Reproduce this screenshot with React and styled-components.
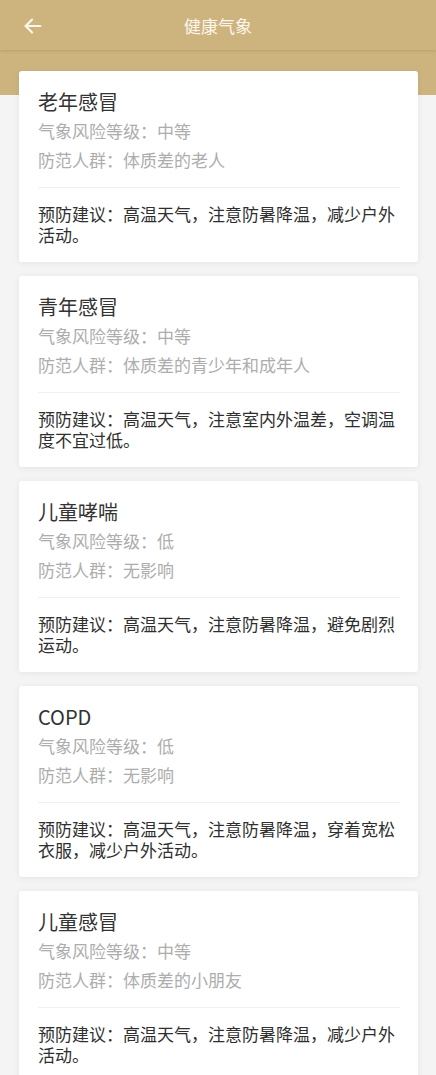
import styled, { createGlobalStyle } from 'styled-components';

const GlobalStyle = createGlobalStyle`
   html, body {
      margin: 0;
      padding: 0;
      background: #f4f4f4;
   }
   * {
      box-sizing: border-box;
   }
   body {
      font-family: "Noto Sans CJK SC", "Noto Sans", sans-serif;
   }
`;

const items = [
   {
      name: '老年感冒',
      level: '中等',
      crowd: '体质差的老人',
      advice: '高温天气，注意防暑降温，减少户外活动。',
   },
   {
      name: '青年感冒',
      level: '中等',
      crowd: '体质差的青少年和成年人',
      advice: '高温天气，注意室内外温差，空调温度不宜过低。',
   },
   {
      name: '儿童哮喘',
      level: '低',
      crowd: '无影响',
      advice: '高温天气，注意防暑降温，避免剧烈运动。',
   },
   {
      name: 'COPD',
      level: '低',
      crowd: '无影响',
      advice: '高温天气，注意防暑降温，穿着宽松衣服，减少户外活动。',
   },
   {
      name: '儿童感冒',
      level: '中等',
      crowd: '体质差的小朋友',
      advice: '高温天气，注意防暑降温，减少户外活动。',
   },
];

function BackArrow() {
   return (
      <svg width="22" height="22" viewBox="0 0 24 24" fill="none"
         stroke="#fbf6ec" strokeWidth="2.4" strokeLinecap="round" strokeLinejoin="round">
         <path d="M20 12H4" />
         <path d="M11 5l-7 7 7 7" />
      </svg>
   );
}

export default function App() {
   return (
      <>
         <GlobalStyle />
         <Page>
            <Header>
               <BackButton>
                  <BackArrow />
               </BackButton>
               <HeaderTitle>健康气象</HeaderTitle>
            </Header>
            <CardList>
               {items.map((item) => (
                  <Card key={item.name}>
                     <Title>{item.name}</Title>
                     <Info>气象风险等级：{item.level}</Info>
                     <Info>防范人群：{item.crowd}</Info>
                     <Divider />
                     <Advice>预防建议：{item.advice}</Advice>
                  </Card>
               ))}
            </CardList>
         </Page>
      </>
   );
}

const Page = styled.div`
   min-height: 100vh;
   background: linear-gradient(#cdb47f 0, #cdb47f 95px, #f4f4f4 95px);
`;

const Header = styled.div`
   position: relative;
   height: 50px;
   display: flex;
   align-items: center;
   justify-content: center;
   background: #cdb47f;
   box-shadow: 0 1px 3px rgba(120, 95, 50, 0.25);
`;

const BackButton = styled.div`
   position: absolute;
   left: 22px;
   top: 15px;
   display: flex;
`;

const HeaderTitle = styled.div`
   color: #fbf6ec;
   font-size: 17px;
   line-height: 50px;
   padding-top: 2px;
`;

const CardList = styled.div`
   display: flex;
   flex-direction: column;
   gap: 14px;
   padding: 21px 18px 20px 19px;
`;

const Card = styled.div`
   background: #fff;
   border-radius: 3px;
   box-shadow: 0 1px 6px rgba(0, 0, 0, 0.07);
   padding: 17px 18px 17px 19px;
`;

const Title = styled.div`
   font-size: 20px;
   line-height: 28px;
   color: #333;
`;

const Info = styled.div`
   font-size: 17px;
   line-height: 29px;
   color: #adadad;
`;

const Divider = styled.div`
   height: 1px;
   background: #f0f0f0;
   margin: 13px 0 15px;
`;

const Advice = styled.div`
   font-size: 17px;
   line-height: 21px;
   color: #2f2f2f;
`;
